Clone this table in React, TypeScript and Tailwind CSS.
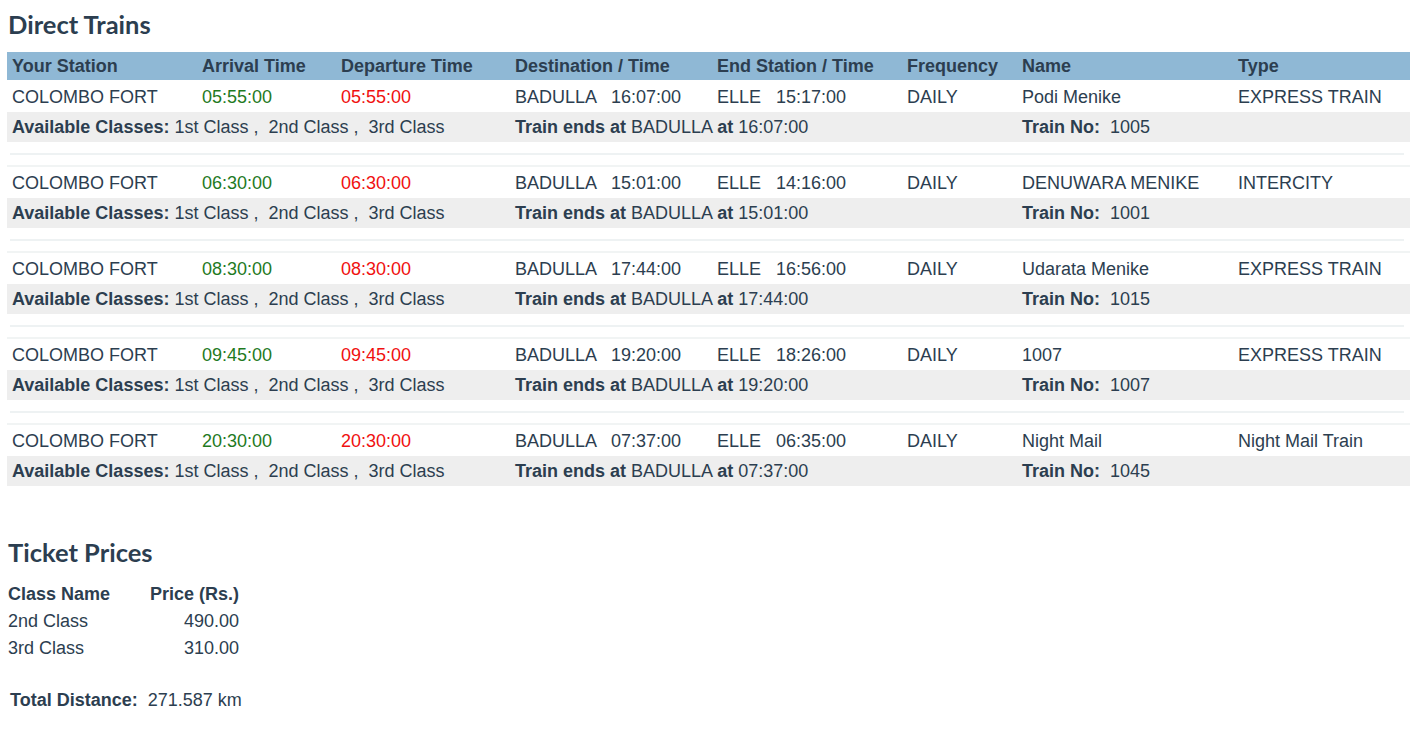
import React from "react";

type Train = {
  arrive: string;
  depart: string;
  dest: string;
  destTime: string;
  end: string;
  endTime: string;
  name: string;
  type: string;
  no: string;
};

const TRAINS: Train[] = [
  { arrive: "05:55:00", depart: "05:55:00", dest: "BADULLA", destTime: "16:07:00", end: "ELLE", endTime: "15:17:00", name: "Podi Menike", type: "EXPRESS TRAIN", no: "1005" },
  { arrive: "06:30:00", depart: "06:30:00", dest: "BADULLA", destTime: "15:01:00", end: "ELLE", endTime: "14:16:00", name: "DENUWARA MENIKE", type: "INTERCITY", no: "1001" },
  { arrive: "08:30:00", depart: "08:30:00", dest: "BADULLA", destTime: "17:44:00", end: "ELLE", endTime: "16:56:00", name: "Udarata Menike", type: "EXPRESS TRAIN", no: "1015" },
  { arrive: "09:45:00", depart: "09:45:00", dest: "BADULLA", destTime: "19:20:00", end: "ELLE", endTime: "18:26:00", name: "1007", type: "EXPRESS TRAIN", no: "1007" },
  { arrive: "20:30:00", depart: "20:30:00", dest: "BADULLA", destTime: "07:37:00", end: "ELLE", endTime: "06:35:00", name: "Night Mail", type: "Night Mail Train", no: "1045" },
];

const COLS = "grid grid-cols-[190px_139px_174px_202px_190px_115px_216px_177px]";
const HEADERS = ["Your Station", "Arrival Time", "Departure Time", "Destination / Time", "End Station / Time", "Frequency", "Name", "Type"];

function TrainBlock({ t }: { t: Train }) {
  return (
    <div>
      <div className={`${COLS} h-[31px] pt-px items-center bg-white`}>
        <div className="pl-[5px]">COLOMBO FORT</div>
        <div className="pl-[5px] text-[#1f7a1f]">{t.arrive}</div>
        <div className="pl-[5px] text-[#f01010]">{t.depart}</div>
        <div className="pl-[5px] whitespace-pre">{t.dest}   {t.destTime}</div>
        <div className="pl-[5px] whitespace-pre">{t.end}   {t.endTime}</div>
        <div className="pl-[5px]">DAILY</div>
        <div className="pl-[5px]">{t.name}</div>
        <div className="pl-[5px]">{t.type}</div>
      </div>
      <div className={`${COLS} h-[30px] items-center bg-[#eeeeee]`}>
        <div className="col-span-3 pl-[5px] whitespace-pre">
          <b>Available Classes:</b> 1st Class ,  2nd Class ,  3rd Class
        </div>
        <div className="col-span-3 pl-[5px]">
          <b>Train ends at</b> {t.dest} <b>at</b> {t.destTime}
        </div>
        <div className="col-span-2 pl-[5px] whitespace-pre">
          <b>Train No:</b>  {t.no}
        </div>
      </div>
    </div>
  );
}

export default function App() {
  return (
    <div className="min-h-[730px] bg-white text-[#2c3e50] text-[18px] leading-none font-['Liberation_Sans',Arial,sans-serif]">
      <h2 className="pl-[8px] pt-[12px] text-[25.5px] font-bold font-['Lato','Liberation_Sans',sans-serif] leading-[24px]">
        Direct Trains
      </h2>

      <div className="ml-[7px] mt-[16px] w-[1403px]">
        <div className={`${COLS} h-[28px] items-center bg-[#8fb8d5] font-bold`}>
          {HEADERS.map((h) => (
            <div key={h} className="pl-[5px]">{h}</div>
          ))}
        </div>
        <div className="h-px" />
        {TRAINS.map((t, i) => (
          <div key={t.no}>
            {i > 0 && (
              <div className="h-[25px] pt-[11px]">
                <div className="mx-[3px] mr-[6px] h-[2px] bg-[#eef2f3]" />
                <div className="mt-[10px] h-[2px] bg-[#f1f4f4]" />
              </div>
            )}
            <TrainBlock t={t} />
          </div>
        ))}
      </div>

      <h2 className="pl-[8px] mt-[54px] text-[25.5px] font-bold font-['Lato','Liberation_Sans',sans-serif] leading-[24px]">
        Ticket Prices
      </h2>

      <table className="ml-[8px] mt-[16px] border-collapse">
        <thead>
          <tr className="h-[27px]">
            <th className="text-left font-bold pr-[40px]">Class Name</th>
            <th className="text-right font-bold">Price (Rs.)</th>
          </tr>
        </thead>
        <tbody>
          <tr className="h-[27px]">
            <td>2nd Class</td>
            <td className="text-right">490.00</td>
          </tr>
          <tr className="h-[27px]">
            <td>3rd Class</td>
            <td className="text-right">310.00</td>
          </tr>
        </tbody>
      </table>

      <div className="ml-[10px] mt-[30px] whitespace-pre">
        <b>Total Distance:</b>  271.587 km
      </div>
    </div>
  );
}
